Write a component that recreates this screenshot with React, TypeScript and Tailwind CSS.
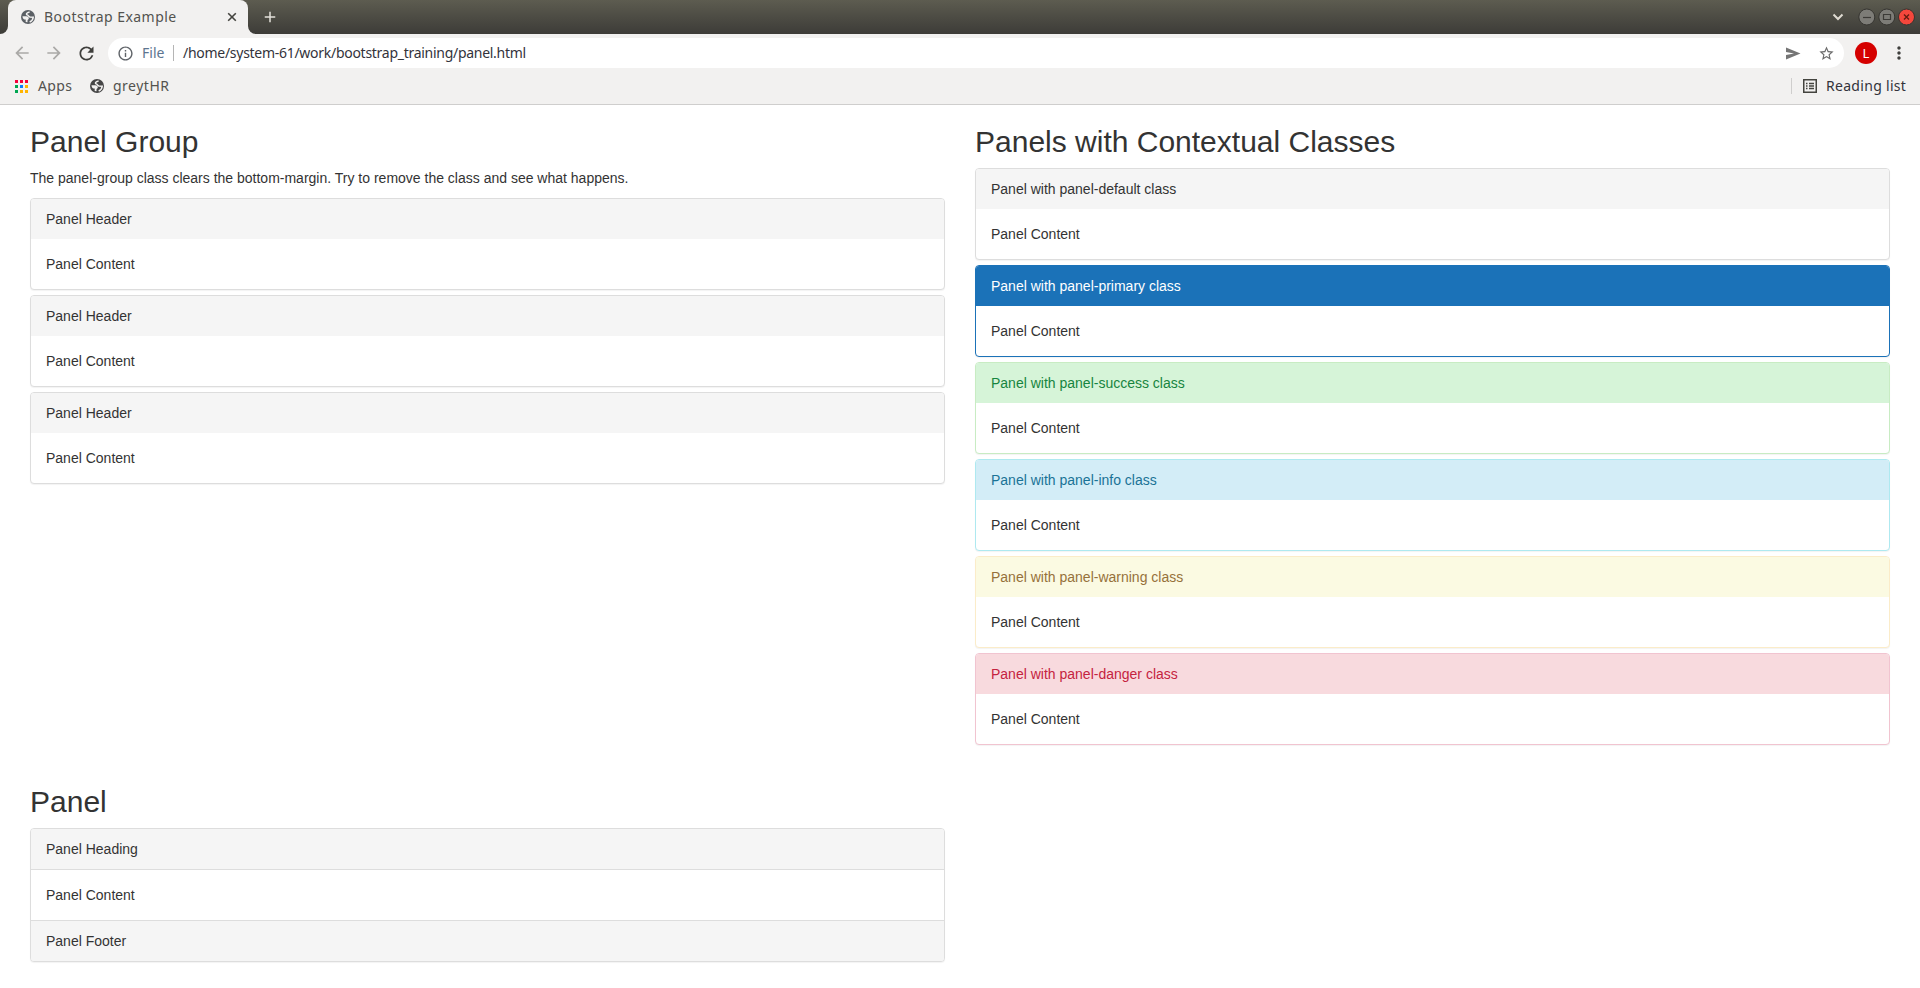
import React from "react";
import { MdArrowBack, MdArrowForward, MdRefresh, MdInfoOutline, MdStarBorder, MdMoreVert, MdAdd } from "react-icons/md";

const dark = "bg-linear-to-b from-[#5d5c50] to-[#3d3c38]";

function Globe({ color }: { color: string }) {
  return (
    <svg width="14" height="14" viewBox="0 0 14 14" className="shrink-0">
      <circle cx="7" cy="7" r="7" fill={color} />
      <path
        d="M8.600 1.900C5.700 2.400 4.600 4.300 6.300 4.900 7.700 5.300 7.200 6.600 9 6.900L12.200 7.200C12 9.600 10.700 11.100 8.700 12"
        fill="none"
        stroke="#f2f1f0"
        strokeWidth="1.500"
      />
      <path d="M1.500 6.200H5.300C6.900 6.200 8 7.400 7.800 8.600 7.600 9.700 6.500 9.700 6.500 10.600V12.300L4.700 12V9.400H3.300C2.200 8.800 1.500 7.600 1.500 6.200z" fill="#f2f1f0" />
    </svg>
  );
}

function TabBar() {
  return (
    <div className="flex h-[34px] bg-[#f2f1f0] text-[#53534f]">
      <div className={`w-2 rounded-br-lg ${dark}`} />
      <div className={`w-60 ${dark}`}>
        <div className="flex h-[34px] items-center rounded-t-lg bg-[#f2f1f0] pr-[11px] pl-[13px]">
          <Globe color="#5b6065" />
          <span className="ml-[9px] flex-1 text-[14px] leading-[18px] tracking-[0.47px] whitespace-nowrap">Bootstrap Example</span>
          <svg width="10" height="10" viewBox="0 0 10 10">
            <path d="m1.200 1.200 7.600 7.600m0-7.600-7.600 7.600" stroke="#44443f" strokeWidth="1.600" />
          </svg>
        </div>
      </div>
      <div className={`flex flex-1 items-center rounded-bl-lg pr-[5px] pl-[13px] ${dark}`}>
        <MdAdd size={18} color="#e3e1da" />
        <div className="flex-1" />
        <svg width="12" height="8" viewBox="0 0 12 8" className="mr-3.5">
          <path d="M1.500 1.500 6 6l4.500-4.500" fill="none" stroke="#dfdbd2" strokeWidth="2" />
        </svg>
        <svg width="57" height="18" viewBox="0 0 57 18">
          <circle cx="8.800" cy="9" r="8" fill="#7d7c77" stroke="#353430" />
          <path d="M5 9.500h8" stroke="#3c3b37" strokeWidth="1.200" />
          <circle cx="28.800" cy="9" r="8" fill="#7d7c77" stroke="#353430" />
          <path d="M25.500 6.500h7v5h-7z" fill="none" stroke="#3c3b37" strokeWidth="1.200" />
          <circle cx="48.500" cy="9" r="8" fill="#f5473c" stroke="#353430" />
          <path d="m46 6.500 5 5m0-5-5 5" stroke="#651c11" strokeWidth="1.400" />
        </svg>
      </div>
    </div>
  );
}

function Toolbar() {
  return (
    <div className="flex h-[38px] items-center bg-[#f2f1f0] pr-2.5 pl-3">
      <MdArrowBack size={20} color="#aaa9a7" />
      <MdArrowForward size={20} color="#aaa9a7" className="ml-3" />
      <MdRefresh size={21} color="#3f3f3c" className="ml-3" />
      <div className="ml-[11px] flex h-[30px] w-[1736px] items-center rounded-full bg-white pr-[9px] pl-[9px]">
        <MdInfoOutline size={17} color="#5f6368" />
        <span className="ml-2 w-[22px] pb-0.5 text-[14px] whitespace-nowrap text-[#5d7590]">File</span>
        <div className="mx-[9px] h-4 w-px bg-[#b5b5b5]" />
        <span className="flex-1 pb-0.5 text-[14px] tracking-[-0.28px] whitespace-nowrap text-[#33333b]">
          /home/system-61/work/bootstrap_training/panel.html
        </span>
        <svg width="15" height="13" viewBox="0 0 15 13">
          <path d="M0 .5 14.500 6.500 0 12.500V8l8-1.500L0 5z" fill="#757575" />
        </svg>
        <MdStarBorder size={17} color="#6a6a6a" className="ml-[17px]" />
      </div>
      <div className="ml-[11px] flex size-[22px] items-center justify-center rounded-full bg-[#d50000] text-[13px] leading-none text-white">L</div>
      <MdMoreVert size={20} color="#3f3f3c" className="ml-3" />
    </div>
  );
}

function Bookmarks() {
  const colors = ["#f4003b", "#f4003b", "#f4003b", "#00a651", "#0a7cff", "#ffb400", "#00a651", "#ffb400", "#ffb400"];
  return (
    <div className="flex h-[33px] items-center border-b border-[#cfcecd] bg-[#f2f1f0] pr-[13px] pb-1 pl-[15px] text-[14px] whitespace-nowrap text-[#53534f]">
      <svg width="13" height="13" viewBox="0 0 13 13">
        {colors.map((c, i) => (
          <rect key={i} x={(i % 3) * 5} y={Math.floor(i / 3) * 5} width="3" height="3" fill={c} />
        ))}
      </svg>
      <span className="ml-2.5 w-[35px] pb-0.5 tracking-[0.4px]">Apps</span>
      <div className="ml-[17px] flex">
        <Globe color="#464646" />
      </div>
      <span className="ml-[9px] pb-0.5 tracking-[0.5px]">greytHR</span>
      <div className="flex-1" />
      <div className="h-4 w-px bg-[#cfcecd]" />
      <svg width="14" height="14" viewBox="0 0 14 14" className="ml-[11px]">
        <path d="M.75.75h12.500v12.500H.75z" fill="none" stroke="#44443f" strokeWidth="1.500" />
        <path d="M3 4.500h1.500M6 4.500h5M3 7h1.500M6 7h5M3 9.500h1.500M6 9.500h5" stroke="#44443f" strokeWidth="1.400" />
      </svg>
      <span className="ml-[9px] w-[81px] pb-0.5 tracking-[0.3px] text-[#33333b]">Reading list</span>
    </div>
  );
}

interface PanelProps {
  title: string;
  border?: string;
  heading?: string;
  footer?: string;
}

function Panel({ title, border = "border-[#ddd]", heading = "bg-[#f5f5f5] text-[#333]", footer }: PanelProps) {
  return (
    <div className={`rounded-[4px] border bg-white shadow-[0_1px_1px_rgba(0,0,0,0.05)] ${border}`}>
      <div className={`rounded-t-[3px] px-[15px] py-2.5 ${heading} ${footer ? "border-b border-[#ddd]" : ""}`}>{title}</div>
      <div className="p-[15px]">Panel Content</div>
      {footer && <div className="rounded-b-[3px] border-t border-[#ddd] bg-[#f5f5f5] px-[15px] py-2.5">{footer}</div>}
    </div>
  );
}

const contextual: PanelProps[] = [
  { title: "Panel with panel-default class" },
  { title: "Panel with panel-primary class", border: "border-[#1b72b8]", heading: "bg-[#1b72b8] text-white" },
  { title: "Panel with panel-success class", border: "border-[#c8ecc3]", heading: "bg-[#d6f4d8] text-[#16853f]" },
  { title: "Panel with panel-info class", border: "border-[#aee9f0]", heading: "bg-[#d3edf7] text-[#1a7396]" },
  { title: "Panel with panel-warning class", border: "border-[#fbecc9]", heading: "bg-[#fbfae2] text-[#96713a]" },
  { title: "Panel with panel-danger class", border: "border-[#f1c4d0]", heading: "bg-[#f8dade] text-[#c5233f]" },
];

function Heading({ children }: { children: React.ReactNode }) {
  return <h2 className="mt-5 mb-2.5 text-[30px] leading-[33px] font-medium">{children}</h2>;
}

export default function App() {
  return (
    <div className="h-[988px] overflow-hidden bg-white">
      <header className="font-['Noto_Sans',sans-serif]">
        <TabBar />
        <Toolbar />
        <Bookmarks />
      </header>
      <main className="grid grid-cols-2 gap-x-[30px] px-[30px] font-['Liberation_Sans',Arial,sans-serif] text-[14px] leading-5 text-[#333]">
        <section>
          <Heading>Panel Group</Heading>
          <p className="mb-2.5">The panel-group class clears the bottom-margin. Try to remove the class and see what happens.</p>
          <div className="flex flex-col gap-[5px]">
            <Panel title="Panel Header" />
            <Panel title="Panel Header" />
            <Panel title="Panel Header" />
          </div>
        </section>
        <section className="mb-5">
          <Heading>Panels with Contextual Classes</Heading>
          <div className="flex flex-col gap-[5px]">
            {contextual.map((p) => (
              <Panel key={p.title} {...p} />
            ))}
          </div>
        </section>
        <section>
          <Heading>Panel</Heading>
          <Panel title="Panel Heading" footer="Panel Footer" />
        </section>
      </main>
    </div>
  );
}
